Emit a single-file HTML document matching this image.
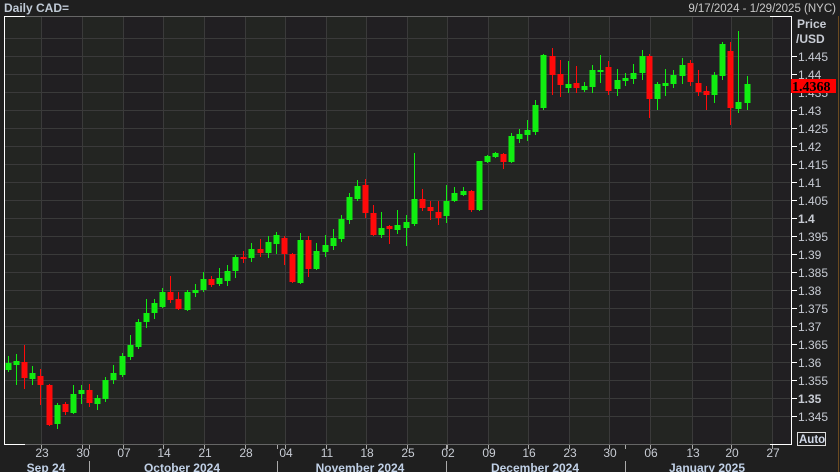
<!DOCTYPE html>
<html><head><meta charset="utf-8"><style>
html,body{margin:0;padding:0;background:#1f1f1f;width:840px;height:472px;overflow:hidden}
svg{display:block}
text{font-family:"Liberation Sans",sans-serif}
</style></head><body>
<svg id="s" width="840" height="472" xmlns="http://www.w3.org/2000/svg">
<rect width="840" height="472" fill="#1f1f1f"/>
<g id="bg"></g>
<g id="grid" stroke="#3a3a3a" stroke-width="1"></g>
<g id="c"></g>
<line x1="838.5" y1="16" x2="838.5" y2="472" stroke="#6a4a20"/>
<line x1="4" y1="16.5" x2="790" y2="16.5" stroke="#666"/>
<line x1="4" y1="444.5" x2="790" y2="444.5" stroke="#666"/>
<line x1="4.5" y1="16" x2="4.5" y2="445" stroke="#fff"/>
<line x1="4" y1="16.5" x2="25" y2="16.5" stroke="#fff"/>
<line x1="4" y1="444.5" x2="25" y2="444.5" stroke="#fff"/>
<line x1="770" y1="16.5" x2="791" y2="16.5" stroke="#fff"/>
<line x1="770" y1="444.5" x2="791" y2="444.5" stroke="#fff"/>
<line x1="791.5" y1="16" x2="791.5" y2="445" stroke="#fff"/>
<g id="ax"></g>
<text x="4" y="12" font-size="12" font-weight="bold" fill="#c0cad6">Daily CAD=</text>
<text x="836" y="12" font-size="11.5" fill="#c8c8c8" text-anchor="end">9/17/2024 - 1/29/2025 (NYC)</text>
<text x="797" y="28" font-size="12" font-weight="bold" fill="#c8ccd4">Price</text>
<text x="796" y="43" font-size="12" font-weight="bold" fill="#c8ccd4">/USD</text>
<rect x="791" y="79" width="45" height="14" fill="#ff0000"/>
<text x="792" y="91" font-size="14" font-weight="bold" fill="#000" style="font-family:'Liberation Serif',serif">1.4368</text>
<rect x="797.5" y="432.5" width="28" height="13" fill="none" stroke="#ddd"/>
<text x="799" y="443" font-size="11.5" font-weight="bold" fill="#d0d8e8">Auto</text>
</svg>
<script>
var NS="http://www.w3.org/2000/svg";
function el(p,t,a){var e=document.createElementNS(NS,t);for(var k in a)e.setAttribute(k,a[k]);p.appendChild(e);return e;}
var bg=document.getElementById('bg'),grid=document.getElementById('grid'),c=document.getElementById('c'),ax=document.getElementById('ax');
var wk=[0.5,41,82,123,163,204,245,285,326,366,407,447,488,528,569,609,650,692,731,772,791];
for(var i=0;i<wk.length-1;i++){el(bg,'rect',{x:Math.max(5,wk[i]),y:17,width:wk[i+1]-Math.max(5,wk[i]),height:427,fill:i%2?'#211f22':'#232522'});}
function Y(p){return 56+(1.445-p)*3600;}
for(var p=1.345;p<=1.4501;p+=0.005){var y=Math.round(Y(p))+0.5;el(grid,'line',{x1:5,x2:790,y1:y,y2:y});
 var lab=(Math.round(p*1000)/1000).toString(); var b=(lab=='1.4'||lab=='1.35');
 if(lab=='1.45')continue;
 el(ax,'line',{x1:791,x2:797,y1:y,y2:y,stroke:'#fff'});
 var t=el(ax,'text',{x:798,y:y+4.5,'font-size':12,fill:'#c8ccd4','font-weight':b?'bold':'normal'});t.textContent=lab;}
var days=['23','30','07','14','21','28','04','11','18','25','02','09','16','23','30','06','13','20','27'];
for(var i=0;i<days.length;i++){var x=wk[i+1];el(grid,'line',{x1:x+0.5,x2:x+0.5,y1:17,y2:444});
 el(ax,'line',{x1:x+0.5,x2:x+0.5,y1:445,y2:449,stroke:'#aaa'});
 var t=el(ax,'text',{x:x+1,y:457,'font-size':12,fill:'#c8ccd4','text-anchor':'middle'});t.textContent=days[i];}
[89,277,446,625].forEach(function(x){el(ax,'line',{x1:x+0.5,x2:x+0.5,y1:445,y2:449,stroke:'#aaa'});el(ax,'line',{x1:x+0.5,x2:x+0.5,y1:461,y2:472,stroke:'#aaa'});});
[['Sep 24',46],['October 2024',182],['November 2024',360],['December 2024',535],['January 2025',707]].forEach(function(m){var t=el(ax,'text',{x:m[1],y:472,'font-size':12,'font-weight':'bold',fill:'#c0d0e6','text-anchor':'middle'});t.textContent=m[0];});
var d=[
[8,370,363,356,372],[16,365,361,354,385],[24,362,378,345,389],[32,379,373,366,385],[40,376,385,369,405],
[49,385,425,384,426],[57,424,405,403,429],[65,404,412,402,415],[73,413,394,385,414],[81,394,390,385,404],
[89,390,403,384,407],[97,404,398,395,410],[105,399,380,377,402],[113,380,373,365,384],[122,375,356,353,377],
[130,357,345,335,360],[138,347,322,319,349],[146,322,313,299,328],[154,313,303,299,319],[162,307,292,288,308],
[170,292,300,276,303],[178,299,309,292,310],[187,310,292,290,311],[195,293,290,284,297],[203,290,279,272,292],
[211,279,285,276,287],[219,284,278,268,286],[227,281,271,265,286],[235,271,257,255,278],[243,257,259,251,263],
[251,258,249,243,262],[260,249,253,239,257],[268,253,242,236,258],[276,244,235,232,254],[284,238,254,236,265],
[292,254,282,253,283],[300,283,240,233,284],[308,240,269,236,277],[316,269,251,243,270],[325,252,245,235,257],
[333,246,238,229,250],[341,239,219,215,242],[349,220,197,193,224],[357,199,186,180,201],[365,185,213,179,218],
[373,213,235,205,236],[381,235,228,212,238],[389,226,229,225,244],[397,230,225,210,234],[406,228,222,215,246],
[414,224,199,153,226],[422,199,208,189,211],[430,207,211,201,220],[438,212,218,201,225],[446,216,201,185,223],
[454,201,193,187,202],[463,195,191,187,196],[471,191,210,190,212],[479,210,161,161,211],[487,162,156,155,163],
[495,157,153,152,158],[503,154,162,153,169],[511,162,136,133,163],[519,139,134,129,143],[527,135,130,120,141],
[535,132,105,100,135],[543,108,55,54,110],[552,56,75,48,95],[560,74,85,60,97],[568,88,84,61,93],
[576,83,88,66,93],[584,90,86,82,92],[592,87,70,65,93],[600,72,70,55,83],[608,67,91,61,95],
[617,89,80,69,96],[625,81,78,73,86],[633,79,73,64,84],[642,73,56,50,80],[649,56,99,54,118],
[657,99,84,82,110],[665,86,83,69,96],[673,84,75,70,88],[682,76,65,58,84],[690,63,82,60,86],
[698,83,92,70,96],[706,91,95,86,110],[714,95,75,72,103],[722,76,44,42,80],[730,51,108,42,125],
[738,109,102,31,113],[747,103,84,76,110]];
d.forEach(function(k){var g=k[2]<k[1],col=g?'#11ee11':'#ff0a0a';var x=k[0];
 el(c,'line',{x1:x+0.5,x2:x+0.5,y1:k[3],y2:k[4],stroke:col,'stroke-width':1});
 var t=Math.min(k[1],k[2]),h=Math.max(2,Math.abs(k[1]-k[2]));
 el(c,'rect',{x:x-2.5,y:t,width:6,height:h,fill:col});});
</script>
</body></html>
